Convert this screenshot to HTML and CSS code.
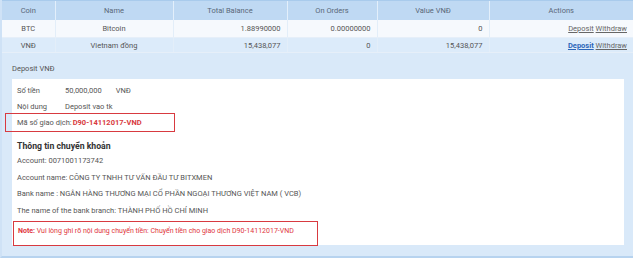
FILE: index.html
```html
<!DOCTYPE html>
<html>
<head>
  <meta charset="utf-8">
  <title>Wallet</title>
  <link rel="stylesheet" href="styles.css">
</head>
<body>
  <div class="wallet">
    <table class="balances">
      <thead>
        <tr>
          <th class="col-coin">Coin</th>
          <th class="col-name">Name</th>
          <th class="col-total">Total Balance</th>
          <th class="col-orders">On Orders</th>
          <th class="col-value">Value VNĐ</th>
          <th class="col-actions">Actions</th>
        </tr>
      </thead>
      <tbody>
        <tr class="row-light">
          <td class="center">BTC</td>
          <td class="center">Bitcoin</td>
          <td class="num">1.88990000</td>
          <td class="num">0.00000000</td>
          <td class="num">0</td>
          <td class="num"><a class="link">Deposit</a> <a class="link">Withdraw</a></td>
        </tr>
        <tr class="row-active">
          <td class="center">VNĐ</td>
          <td class="center">Vietnam đồng</td>
          <td class="num">15,438,077</td>
          <td class="num">0</td>
          <td class="num">15,438,077</td>
          <td class="num"><a class="link link-active">Deposit</a> <a class="link">Withdraw</a></td>
        </tr>
      </tbody>
    </table>

    <div class="deposit-panel">
      <div class="panel-title">Deposit VNĐ</div>
      <div class="panel-body">
        <div class="field">
          <span class="field-label">Số tiền</span>
          <span>50,000,000</span>
          <span class="unit">VNĐ</span>
        </div>
        <div class="field">
          <span class="field-label">Nội dung</span>
          <span>Deposit vao tk</span>
        </div>
        <div class="field code-box">
          Mã số giao dịch: <strong class="code">D90-14112017-VND</strong>
        </div>

        <h3 class="bank-title">Thông tin chuyển khoản</h3>
        <div class="bank-line">Account: 0071001173742</div>
        <div class="bank-line">Account name: CÔNG TY TNHH TƯ VẤN ĐẦU TƯ BITXMEN</div>
        <div class="bank-line">Bank name : NGÂN HÀNG THƯƠNG MẠI CỔ PHẦN NGOẠI THƯƠNG VIỆT NAM ( VCB)</div>
        <div class="bank-line">The name of the bank branch: THÀNH PHỐ HỒ CHÍ MINH</div>

        <div class="note-box">
          <strong>Note:</strong> Vui lòng ghi rõ nội dung chuyển tiền: Chuyển tiền cho giao dịch D90-14112017-VND
        </div>
      </div>
    </div>
  </div>
</body>
</html>
```

FILE: styles.css
```css
:root {
  --head-bg: #bfd9f3;
  --row-light: #f6f9fd;
  --row-blue: #dcebfa;
  --panel-bg: #d9e9f9;
  --line: #a9cbec;
  --text: #555;
  --red: #d83a40;
  --link-blue: #2c66b8;
}

* {
  box-sizing: border-box;
  margin: 0;
  padding: 0;
}

html, body {
  background: #fff;
  font-family: Roboto, "Noto Sans", sans-serif;
  font-size: 7.5px;
  color: var(--text);
}

.wallet {
  width: 633px;
  height: 258px;
  background: var(--panel-bg);
  border-left: 2px solid #cfe2f6;
  border-bottom: 2px solid #b7d3ef;
}

/* Table */
.balances {
  width: 100%;
  border-collapse: collapse;
  table-layout: fixed;
}

.balances th {
  height: 19px;
  background: var(--head-bg);
  font-weight: normal;
  color: #5a6878;
  border-left: 1px solid #e3effb;
  border-top: 1px solid #a9cbec;
}

.balances th:first-child {
  border-left: none;
}

.col-coin { width: 53px; }
.col-name { width: 118px; }
.col-total { width: 114px; }
.col-orders { width: 90px; }
.col-value { width: 112px; }
.col-actions { width: 144px; }

.balances td {
  height: 18px;
  padding: 0 6px;
  border-left: 1px solid #e3eef9;
  border-bottom: 1px solid #e6eff9;
  white-space: nowrap;
}

.balances td:first-child {
  border-left: none;
}

.row-light td {
  background: var(--row-light);
}

.row-active td {
  background: var(--row-blue);
  height: 15px;
}

.center {
  text-align: center;
}

.num {
  text-align: right;
}

.link {
  color: #666;
  text-decoration: underline;
}

.link-active {
  color: var(--link-blue);
  font-weight: bold;
}

/* Deposit panel */
.deposit-panel {
  padding: 0 9px 11px 10px;
}

.panel-title {
  padding: 10px 0 4px 0;
  line-height: 12px;
  color: #555;
}

.panel-body {
  background: #fff;
  height: 166px;
  padding: 3px 5px 0 5px;
}

.field {
  display: flex;
  align-items: center;
  height: 16px;
}

.field-label {
  width: 48px;
}

.unit {
  margin-left: 14px;
}

.code-box {
  margin: -1px 0 0 -12px;
  padding-left: 11px;
  width: 170px;
  height: 19px;
  border: 1.5px solid var(--red);
}

.code {
  color: var(--red);
  margin-left: 1px;
}

.bank-title {
  font-size: 8.7px;
  font-weight: bold;
  color: #333;
  margin: 7px 0 0 0;
  line-height: 14px;
}

.bank-line {
  height: 16.5px;
  line-height: 16.5px;
}

.bank-line:first-of-type {
  margin-top: 2px;
}

.note-box {
  margin: 2px 0 0 -4px;
  width: 305px;
  height: 25px;
  padding: 5px 0 0 4px;
  border: 1.5px solid var(--red);
  color: #e0353d;
  font-size: 7px;
}
```
